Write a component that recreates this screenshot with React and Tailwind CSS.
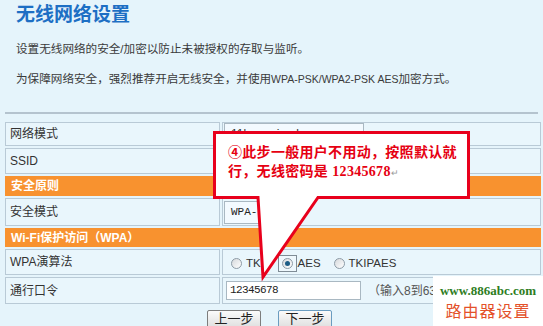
import React from "react";

const sans = "font-['Liberation_Sans','Noto_Sans_CJK_SC',sans-serif]";

function Radio({ checked }) {
  return (
    <span className="flex h-[11px] w-[11px] items-center justify-center rounded-full border border-[#8d9ba6] bg-gradient-to-br from-[#d6d9dc] to-[#ffffff]">
      {checked && <span className="h-[5px] w-[5px] rounded-full bg-[#1d5d86]" />}
    </span>
  );
}

function Row({ label, h, children }) {
  return (
    <div className={`grid grid-cols-[215px_1fr] gap-x-[2px] ${h}`}>
      <div className="flex items-center border border-[#b9cad6] bg-[#e9f6fc] pl-[4px] text-[12px] text-[#333]">
        {label}
      </div>
      <div className="flex items-center border border-[#b9cad6] bg-[#e9f6fc]">{children}</div>
    </div>
  );
}

function Section({ title, h }) {
  return (
    <div className={`flex items-center bg-[#f8922f] pl-[6px] text-[12px] font-bold text-white ${h}`}>
      {title}
    </div>
  );
}

export default function App() {
  return (
    <div className={`relative h-[326px] w-[543px] overflow-hidden bg-[#e5f4fb] ${sans}`}>
      <div className="h-[112px] px-[16px] pt-[4px]">
        <h1 className="text-[19px] font-bold leading-[22px] text-[#1d6fc4]">无线网络设置</h1>
        <p className="mt-[15px] text-[11.6px] leading-[16px] text-[#3a3a3a]">
          设置无线网络的安全/加密以防止未被授权的存取与监听。
        </p>
        <p className="mt-[14px] text-[11.6px] leading-[16px] text-[#3a3a3a]">
          为保障网络安全，强烈推荐开启无线安全，并使用
          <span className="text-[10.5px]">WPA-PSK/WPA2-PSK AES</span>加密方式。
        </p>
      </div>
      <div className="mx-[5px] h-[2px] bg-[#b4c3ce]" />

      <div className="ml-[5px] mt-[8px] flex w-[536px] flex-col gap-[2px]">
        <Row label="网络模式" h="h-[24px]">
          <div className="ml-px h-[22px] w-[140px] border border-[#a9b8c2] bg-[#f3faff] pl-[6px] text-[12px] leading-[20px] text-[#333]">
            11bgn mixed
          </div>
        </Row>
        <Row label="SSID" h="h-[26px]">
          <div className="ml-[3px] h-[20px] w-[140px] border border-[#a9b8c2] bg-white" />
        </Row>
        <Section title="安全原则" h="h-[20px]" />
        <Row label="安全模式" h="h-[28px]">
          <div className="ml-px h-[23px] w-[72px] border border-[#a9b8c2] bg-[#f3faff] pl-[6px] font-['Liberation_Mono',monospace] text-[11px] leading-[21px] text-[#222]">
            WPA-PSK
          </div>
        </Row>
        <Section title="Wi-Fi保护访问（WPA）" h="h-[19px]" />
        <Row label="WPA演算法" h="h-[26px]">
          <div className="flex items-center pt-[3px] text-[11.5px] text-[#333]">
            <span className="ml-[8px]">
              <Radio />
            </span>
            <span className="ml-[4px]">TKIP</span>
            <span className="ml-[6px] flex h-[17px] w-[19px] items-center justify-center border border-[#7f8c96] bg-[#eef8fd]">
              <Radio checked />
            </span>
            <span className="ml-px">AES</span>
            <span className="ml-[13px]">
              <Radio />
            </span>
            <span className="ml-[4px]">TKIPAES</span>
          </div>
        </Row>
        <Row label="通行口令" h="h-[27px]">
          <div className="ml-[3px] flex h-[19px] w-[135px] items-center border border-[#a9b8c2] bg-white pl-[3px] font-['Liberation_Mono',monospace] text-[11px] tracking-[-0.6px] text-[#222]">
            12345678
          </div>
          <span className="ml-[7px] whitespace-nowrap text-[12px] text-[#555]">（输入8到63</span>
        </Row>
      </div>

      <div className="ml-[207px] mt-[6px] flex gap-[17px]">
        <button className="h-[22px] w-[54px] rounded-[2px] border border-[#7d7d7d] bg-gradient-to-b from-[#fbfbfb] to-[#d9d9d9] pb-[4px] text-[13px] leading-[14px] text-[#222]">
          上一步
        </button>
        <button className="h-[22px] w-[54px] rounded-[2px] border border-[#6a9cc0] bg-gradient-to-b from-[#fbfbfb] to-[#d9d9d9] pb-[4px] text-[13px] leading-[14px] text-[#222]">
          下一步
        </button>
      </div>

      <svg className="pointer-events-none absolute left-0 top-0" width="543" height="326">
        <path
          d="M214.5 132.5 H468.5 V197.5 H318 L263 277 L258 197.5 H214.5 Z"
          fill="#fff"
          stroke="#e8001c"
          strokeWidth="3"
        />
      </svg>
      <div className="absolute left-[228px] top-[143px] text-[14px] font-bold leading-[19px] tracking-[0.3px] text-[#e60012]">
        <div>④此步一般用户不用动，按照默认就</div>
        <div>
          行，无线密码是{" "}
          <span className="font-['Liberation_Serif',serif] text-[14px]">12345678</span>
          <span className="text-[9px] font-normal text-[#999]">↵</span>
        </div>
      </div>

      <div className="absolute left-[433px] top-[276px] flex h-[50px] w-[110px] flex-col items-center bg-white">
        <div className="mt-[6px] whitespace-nowrap font-['Liberation_Serif',serif] text-[13px] font-bold leading-[18px] text-[#2e7d1e]">
          www.886abc.com
        </div>
        <div className="mt-[2px] text-[16px] leading-[20px] tracking-[1px] text-[#e4512a]">路由器设置</div>
      </div>
    </div>
  );
}
